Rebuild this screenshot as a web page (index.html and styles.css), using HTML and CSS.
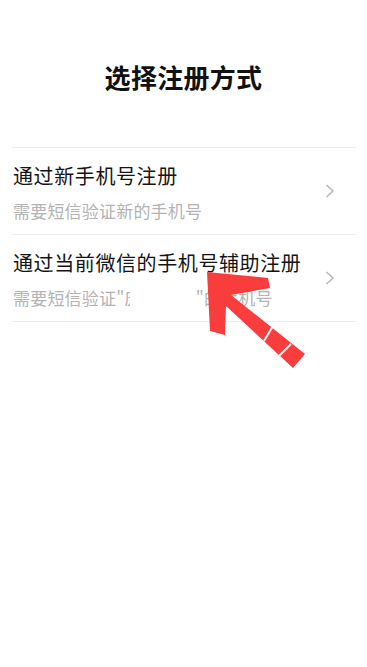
FILE: index.html
```html
<!DOCTYPE html>
<html lang="zh-CN">
<head>
<meta charset="utf-8">
<title>选择注册方式</title>
<link rel="stylesheet" href="styles.css">
</head>
<body>
<div class="page">
  <h1 class="title">选择注册方式</h1>
  <div class="list">
    <div class="row">
      <div class="row-text">
        <div class="row-title">通过新手机号注册</div>
        <div class="row-sub">需要短信验证新的手机号</div>
      </div>
      <svg class="chevron" width="10" height="14" viewBox="0 0 10 14"><polyline points="1.5,1 8,7 1.5,13" fill="none" stroke="#b8b8b8" stroke-width="1.6"/></svg>
    </div>
    <div class="row">
      <div class="row-text">
        <div class="row-title">通过当前微信的手机号辅助注册</div>
        <div class="row-sub">需要短信验证"<span class="hidden-name">庞</span><span class="mask"></span>"的手机号</div>
      </div>
      <svg class="chevron" width="10" height="14" viewBox="0 0 10 14"><polyline points="1.5,1 8,7 1.5,13" fill="none" stroke="#b8b8b8" stroke-width="1.6"/></svg>
    </div>
  </div>
  <svg class="arrow" width="367" height="667" viewBox="0 0 367 667">
    <polygon points="207,272 268,278 270,288 231,295 305,354 293,368 226,306 225,335 210,331" fill="#f93d3d"/>
    <line x1="264" y1="341" x2="273" y2="326" stroke="#fff" stroke-width="2"/>
    <line x1="279" y1="356" x2="291" y2="344" stroke="#fff" stroke-width="2"/>
  </svg>
</div>
</body>
</html>
```

FILE: styles.css
```css
html, body {
  margin: 0;
  padding: 0;
  background: #ffffff;
}
body {
  font-family: "Noto Sans CJK SC", "Noto Sans", sans-serif;
  color: #111111;
}
.page {
  position: relative;
  width: 367px;
  height: 667px;
  overflow: hidden;
}
.title {
  margin: 0;
  padding-top: 59px;
  height: 36px;
  line-height: 36px;
  font-size: 26px;
  font-weight: 700;
  text-align: center;
  color: #111111;
  letter-spacing: 0.3px;
}
.list {
  margin: 52px 11px 0 12px;
  border-top: 1px solid #ececec;
}
.row {
  height: 86px;
  border-bottom: 1px solid #ececec;
  display: flex;
  align-items: center;
  justify-content: space-between;
  padding-left: 1px;
  padding-right: 21px;
}
.row-text {
  align-self: flex-start;
  padding-top: 14px;
}
.row-title {
  font-size: 20px;
  letter-spacing: 0.6px;
  line-height: 28px;
  color: #141414;
}
.row-sub {
  margin-top: 10px;
  font-size: 17px;
  letter-spacing: 0.2px;
  line-height: 22px;
  color: #b3b3b3;
  white-space: nowrap;
}
.hidden-name {
  display: inline-block;
}
.mask {
  display: inline-block;
  position: relative;
  vertical-align: top;
  width: 66px;
  height: 22px;
  margin-left: -12px;
  background: #ffffff;
}
.chevron {
  display: block;
}
.arrow {
  position: absolute;
  left: 0;
  top: 0;
  pointer-events: none;
}
```
